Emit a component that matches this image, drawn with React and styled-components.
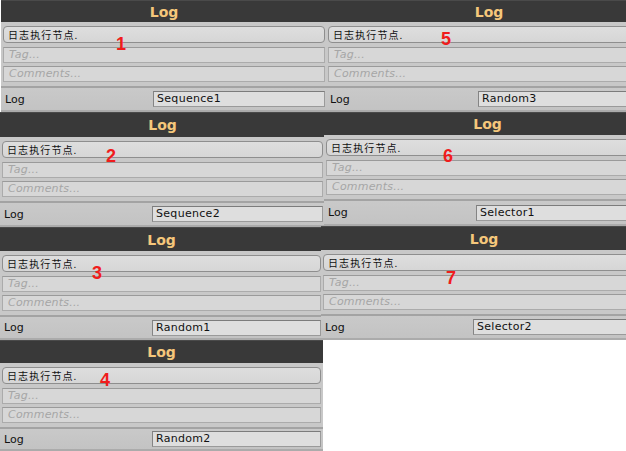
import React from "react";
import styled, { createGlobalStyle } from "styled-components";

const Global = createGlobalStyle`
  html, body { margin: 0; padding: 0; background: #ffffff; }
  body { font-family: "DejaVu Sans", "Noto Sans CJK SC", sans-serif; }
`;

const Page = styled.div`
  width: 626px;
  height: 451px;
  overflow: hidden;
  display: grid;
  grid-template-columns: 321px minmax(0, 1fr);
  align-items: start;
  background: #ffffff;
`;

const Column = styled.div`
  display: flex;
  flex-direction: column;
  position: relative;
  z-index: ${(p) => p.$layer};
`;

const Panel = styled.section`
  position: relative;
  box-sizing: border-box;
  width: ${(p) => p.$w}px;
  height: ${(p) => p.$h}px;
  margin-left: ${(p) => p.$x}px;
  display: flex;
  flex-direction: column;
  background: #c8c8c8;
  flex: none;
`;

const Header = styled.header`
  height: ${(p) => p.$h}px;
  line-height: ${(p) => p.$h}px;
  flex: none;
  background: #393939;
  border-top: 1px solid #4a4a4a;
  box-sizing: border-box;
  color: #f5c77b;
  font-family: "DejaVu Sans", sans-serif;
  font-weight: bold;
  font-size: 14px;
  text-align: center;
`;

const Fields = styled.div`
  display: flex;
  flex-direction: column;
  padding: 4px 2px 4px 2px;
  gap: 3px;
  flex: none;
`;

const DescField = styled.div`
  height: 17px;
  box-sizing: border-box;
  border: 1px solid #8e8e8e;
  border-radius: 4px;
  background: linear-gradient(#dedede, #d6d6d6);
  padding: 0 4px;
  font-family: "Noto Sans CJK SC", "DejaVu Sans", sans-serif;
  font-size: 10px;
  line-height: 15px;
  color: #111;
  letter-spacing: 1.1px;
  margin-bottom: 1px;
`;

const Placeholder = styled.div`
  height: 16px;
  box-sizing: border-box;
  border: 1px solid #ababab;
  border-top-color: #9a9a9a;
  background: #d7d7d7;
  padding: 0 5px;
  font-family: "DejaVu Sans", sans-serif;
  font-style: italic;
  font-size: 11px;
  line-height: 14px;
  color: #a6a6a6;
  letter-spacing: 0.2px;
`;

const Separator = styled.div`
  height: 2px;
  flex: none;
  background: #a3a3a3;
`;

const BottomRow = styled.div`
  flex: 1;
  display: grid;
  grid-template-columns: 150px 1fr;
  align-items: center;
  padding: 0 2px 0 2px;
  background: linear-gradient(#c9c9c9, #c3c3c3);
  border-bottom: 2px solid #ababab;
`;

const Label = styled.span`
  font-family: "DejaVu Sans", sans-serif;
  font-size: 11px;
  color: #111;
  padding-left: 2px;
`;

const ValueBox = styled.div`
  height: 16px;
  box-sizing: border-box;
  border: 1px solid #9a9a9a;
  border-top-color: #7c7c7c;
  border-left-color: #848484;
  background: #dedede;
  padding: 0 3px;
  font-family: "DejaVu Sans", sans-serif;
  font-size: 11px;
  line-height: 14px;
  color: #111;
  letter-spacing: 0.3px;
`;

const Badge = styled.span`
  position: absolute;
  left: ${(p) => p.$left}px;
  top: ${(p) => p.$top}px;
  font-family: "Liberation Sans", sans-serif;
  font-weight: bold;
  font-size: 18px;
  line-height: 1;
  color: #f01c1c;
`;

function LogPanel({ p }) {
  return (
    <Panel $w={p.w} $h={p.h} $x={p.x}>
      <Header $h={p.head}>Log</Header>
      <Fields>
        <DescField>日志执行节点.</DescField>
        <Placeholder>Tag...</Placeholder>
        <Placeholder>Comments...</Placeholder>
      </Fields>
      <Separator />
      <BottomRow>
        <Label>Log</Label>
        <ValueBox>{p.value}</ValueBox>
      </BottomRow>
      <Badge $left={p.n[1]} $top={p.n[2]}>{p.n[0]}</Badge>
    </Panel>
  );
}

const left = [
  { x: 1, w: 326, h: 112, head: 22, value: "Sequence1", n: ["1", 115, 35] },
  { x: 0, w: 325, h: 115, head: 25, value: "Sequence2", n: ["2", 106, 35] },
  { x: 0, w: 323, h: 113, head: 24, value: "Random1", n: ["3", 92, 37] },
  { x: 0, w: 323, h: 111, head: 23, value: "Random2", n: ["4", 100, 31] },
];

const right = [
  { x: 5, w: 326, h: 112, head: 22, value: "Random3", n: ["5", 115, 30] },
  { x: 3, w: 327, h: 114, head: 23, value: "Selector1", n: ["6", 119, 35] },
  { x: 0, w: 326, h: 114, head: 24, value: "Selector2", n: ["7", 125, 43] },
];

export default function App() {
  return (
    <>
      <Global />
      <Page>
        <Column $layer={0}>
          {left.map((p) => (
            <LogPanel key={p.value} p={p} />
          ))}
        </Column>
        <Column $layer={1}>
          {right.map((p) => (
            <LogPanel key={p.value} p={p} />
          ))}
        </Column>
      </Page>
    </>
  );
}
